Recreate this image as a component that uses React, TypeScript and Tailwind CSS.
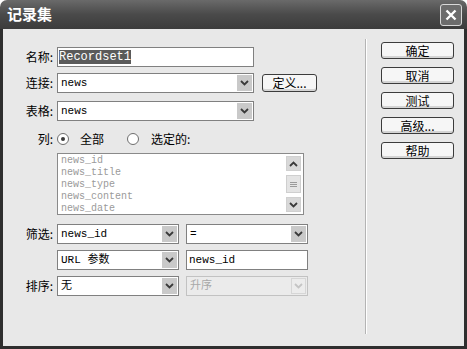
const cjk = "font-['SimSun','Noto_Sans_CJK_SC',sans-serif]";
const mono = "font-['Liberation_Mono','Noto_Sans_CJK_SC',monospace]";

const Chevron = ({ light }: { light?: boolean }) => (
  <svg width="9" height="6" viewBox="0 0 9 6">
    <path d="M1 1 L4.5 4.5 L8 1" fill="none" stroke={light ? "#c4c4c4" : "#3a3a3a"} strokeWidth="1.8" />
  </svg>
);

const Select = ({ value, w, disabled }: { value: string; w: string; disabled?: boolean }) => (
  <div
    className={`${w} flex h-[20px] items-center justify-between border pl-[3px] pr-[1px] ${
      disabled ? "border-[#c2c2c2] bg-[#ebebeb] text-[#a8a8a8]" : "border-[#808080] bg-white text-black"
    }`}
  >
    <span className={`${mono} text-[11px] leading-none`}>{value}</span>
    <div
      className={`flex h-[16px] w-[15px] items-center justify-center ${
        disabled ? "border border-[#d6d6d6] bg-[#ececec]" : "bg-[#c9c9c9]"
      }`}
    >
      <Chevron light={disabled} />
    </div>
  </div>
);

const Label = ({ text }: { text: string }) => (
  <div className={`w-[54px] shrink-0 pr-[4px] text-right text-[12px] text-black ${cjk}`}>{text}</div>
);

const Btn = ({ text }: { text: string }) => (
  <div
    className={`flex h-[17px] w-[73px] items-center justify-center rounded-[3px] border border-[#3c3c3c] bg-[#f6f6f6] text-[12px] leading-none text-black shadow-[inset_0_-2px_0_#d4d4d4] ${cjk}`}
  >
    {text}
  </div>
);

const Radio = ({ on }: { on?: boolean }) => (
  <div className="flex h-[12px] w-[12px] items-center justify-center rounded-full border border-[#6e6e6e] bg-white">
    {on && <div className="h-[4px] w-[4px] rounded-full bg-[#3a3a3a]" />}
  </div>
);

export default function App() {
  return (
    <div className="h-[349px] w-[467px] bg-white">
      <div className="flex h-full w-full flex-col overflow-hidden rounded-t-[7px]">
        <div className="flex h-[29px] shrink-0 items-center justify-between bg-gradient-to-b from-[#6a6a6a] via-[#4a4a4a] to-[#3c3c3c] pl-[7px] pr-[5px]">
          <span className={`text-[15px] font-bold text-white ${cjk}`}>记录集</span>
          <div className="flex h-[22px] w-[22px] items-center justify-center rounded-[3px] border border-[#d8d8d8] bg-[#6c6c6c]">
            <svg width="12" height="12" viewBox="0 0 12 12">
              <path d="M1.5 1.5 L10.5 10.5 M10.5 1.5 L1.5 10.5" stroke="white" strokeWidth="2.4" />
            </svg>
          </div>
        </div>
        <div className="flex flex-1 border-x-[3px] border-b-[3px] border-[#2e2e2e] bg-[#e8e8e8]">
          <div className="w-[362px] shrink-0 pt-[18px]">
            <div className="flex h-[20px] items-center">
              <Label text="名称:" />
              <div className="flex h-[20px] w-[197px] items-center border border-[#808080] bg-white pl-[1px]">
                <span className={`bg-[#5a5a5a] text-[12px] leading-[14px] text-white ${mono}`}>Recordset1</span>
              </div>
            </div>
            <div className="mt-[6px] flex h-[20px] items-center">
              <Label text="连接:" />
              <Select value="news" w="w-[197px]" />
              <div
                className={`ml-[8px] flex h-[18px] w-[55px] items-center justify-center rounded-[3px] border border-[#3c3c3c] bg-[#f6f6f6] text-[12px] leading-none shadow-[inset_0_-2px_0_#d4d4d4] ${cjk}`}
              >
                定义...
              </div>
            </div>
            <div className="mt-[8px] flex h-[20px] items-center">
              <Label text="表格:" />
              <Select value="news" w="w-[197px]" />
            </div>
            <div className="mt-[11px] flex h-[14px] items-center">
              <Label text="列:" />
              <Radio on />
              <span className={`ml-[11px] text-[12px] ${cjk}`}>全部</span>
              <div className="ml-[23px]">
                <Radio />
              </div>
              <span className={`ml-[12px] text-[12px] ${cjk}`}>选定的:</span>
            </div>
            <div className="mt-[7px] flex">
              <div className="w-[54px] shrink-0" />
              <div className="flex h-[62px] w-[247px] border border-[#8a8a8a] bg-white">
                <div className={`flex-1 pl-[3px] pt-[1px] text-[10px] leading-[12px] text-[#9a9a9a] ${mono}`}>
                  <div>news_id</div>
                  <div>news_title</div>
                  <div>news_type</div>
                  <div>news_content</div>
                  <div>news_date</div>
                </div>
                <div className="my-[2px] mr-[2px] flex w-[15px] flex-col justify-between">
                  <div className="flex h-[15px] items-center justify-center border border-[#d0d0d0] bg-[#d8d8d8]">
                    <svg width="9" height="6" viewBox="0 0 9 6">
                      <path d="M1 5 L4.5 1.5 L8 5" fill="none" stroke="#3a3a3a" strokeWidth="1.8" />
                    </svg>
                  </div>
                  <div className="flex h-[18px] flex-col items-center justify-center gap-[1px] border border-[#cfcfcf] bg-[#e4e4e4]">
                    <div className="h-px w-[7px] bg-[#9a9a9a]" />
                    <div className="h-px w-[7px] bg-[#9a9a9a]" />
                    <div className="h-px w-[7px] bg-[#9a9a9a]" />
                  </div>
                  <div className="flex h-[15px] items-center justify-center border border-[#d0d0d0] bg-[#d8d8d8]">
                    <Chevron />
                  </div>
                </div>
              </div>
            </div>
            <div className="mt-[9px] flex h-[20px] items-center">
              <Label text="筛选:" />
              <Select value="news_id" w="w-[122px]" />
              <div className="ml-[7px]">
                <Select value="=" w="w-[122px]" />
              </div>
            </div>
            <div className="mt-[6px] flex h-[20px] items-center">
              <div className="w-[54px] shrink-0" />
              <Select value="URL 参数" w="w-[122px]" />
              <div className="ml-[7px] flex h-[20px] w-[122px] items-center border border-[#808080] bg-white pl-[2px]">
                <span className={`text-[11px] leading-none ${mono}`}>news_id</span>
              </div>
            </div>
            <div className="mt-[6px] flex h-[20px] items-center">
              <Label text="排序:" />
              <Select value="无" w="w-[122px]" />
              <div className="ml-[7px]">
                <Select value="升序" w="w-[122px]" disabled />
              </div>
            </div>
          </div>
          <div className="mb-[12px] mt-[10px] w-[2px] border-l border-r border-l-[#b4b4b4] border-r-white" />
          <div className="flex flex-col gap-[8px] pl-[14px] pt-[13px]">
            <Btn text="确定" />
            <Btn text="取消" />
            <Btn text="测试" />
            <Btn text="高级..." />
            <Btn text="帮助" />
          </div>
        </div>
      </div>
    </div>
  );
}
